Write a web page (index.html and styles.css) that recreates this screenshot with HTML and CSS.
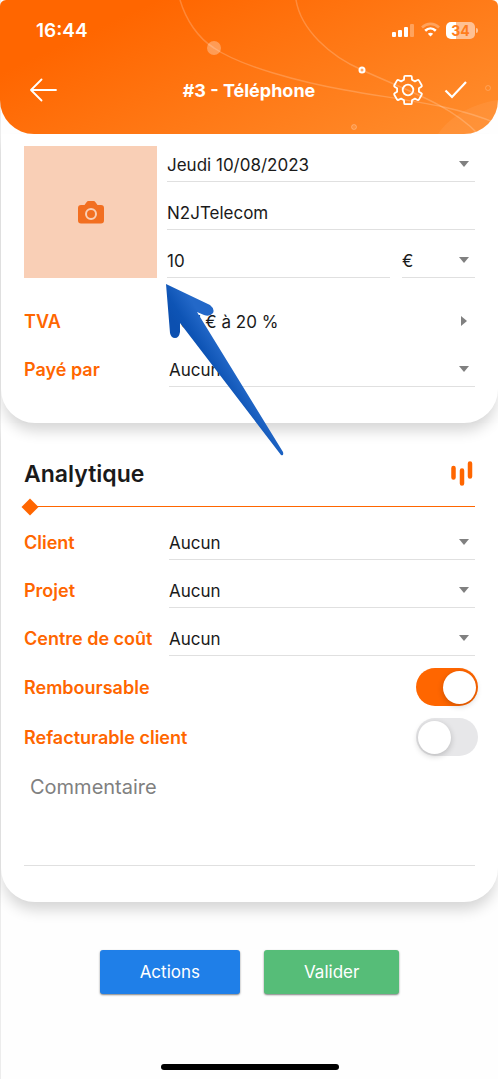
FILE: index.html
```html
<!DOCTYPE html>
<html lang="fr">
<head>
<meta charset="utf-8">
<meta name="viewport" content="width=device-width, initial-scale=1">
<title>#3 - Téléphone</title>
<link rel="stylesheet" href="styles.css">
</head>
<body>
<div class="screen">
  <header class="header">
    <svg class="header-art" viewBox="0 0 498 134" preserveAspectRatio="xMidYMid slice" aria-hidden="true">
      <g fill="none" stroke="#fff" stroke-opacity=".2" stroke-width="1.5">
        <path d="M180 0C186 20 198 38 214 48C240 66 300 82 345 90C400 100 452 104 498 124"/>
        <path d="M296 0C301 30 330 56 362 70C405 90 450 104 478 134"/>
      </g>
      <circle cx="214" cy="48" r="7" fill="#fff" fill-opacity=".3"/>
      <circle cx="362" cy="70" r="2.5" fill="#ffa868" stroke="#fff" stroke-width="2"/>
      <circle cx="354" cy="127" r="2.5" fill="#fff" fill-opacity=".12" stroke="#fff" stroke-opacity=".25"/>
      <circle cx="488" cy="88" r="2.5" fill="none" stroke="#fff" stroke-opacity=".2"/>
      <path d="M438 134C450 116 472 104 498 100V134Z" fill="#fff" fill-opacity=".06"/>
    </svg>
    <div class="status">
      <span class="time">16:44</span>
      <div class="status-icons">
        <svg width="23" height="16" viewBox="0 0 23 16" fill="#fff" aria-hidden="true">
          <rect y="10" width="4" height="5" rx="1"/><rect x="6" y="8" width="4" height="7" rx="1"/><rect x="12" y="5" width="4" height="10" rx="1"/><rect x="18" y="2" width="4" height="13" rx="1" opacity=".3"/>
        </svg>
        <svg width="19" height="16" viewBox="0 0 19 16" fill="none" stroke="#fff" stroke-width="2.6" aria-hidden="true">
          <path d="M1 5.5C6 .6 13 .6 18 5.500" opacity=".3"/>
          <path d="M4.200 8.700C7.300 5.800 11.700 5.800 14.800 8.700"/>
          <path d="M9.500 14.500L6.800 11.800C8.500 10.500 10.500 10.500 12.200 11.800Z" fill="#fff" stroke="none"/>
        </svg>
        <span class="battery">34</span>
      </div>
    </div>
    <div class="toolbar">
      <button class="icon-button" type="button" aria-label="Retour">
        <svg width="28" height="24" viewBox="0 0 28 24" fill="none" stroke="#fff" stroke-width="1.800" stroke-linecap="round" stroke-linejoin="round"><path d="M26 12H1M11.500 1.500L1 12L11.500 22.500"/></svg>
      </button>
      <h1 class="title">#3 - Téléphone</h1>
      <div class="tools">
        <button class="icon-button" type="button" aria-label="Paramètres">
          <svg width="32" height="32" viewBox="-16 -16 32 32" fill="none" stroke="#fff" stroke-width="1.800" stroke-linejoin="round"><path d="M-2.800 -14.200H2.800Q3.800 -14.200 3.800 -13.200L4 -10.300L6.900 -8.600L9.600 -10Q10.400 -10.400 10.900 -9.600L13.700 -4.700Q14.200 -3.800 13.400 -3.300L10.900 -1.700V1.700L13.400 3.300Q14.200 3.800 13.700 4.700L10.900 9.600Q10.400 10.400 9.600 10L6.900 8.600L4 10.300L3.800 13.200Q3.800 14.200 2.800 14.200H-2.800Q-3.800 14.200 -3.800 13.200L-4 10.300L-6.900 8.600L-9.600 10Q-10.400 10.400 -10.900 9.600L-13.700 4.700Q-14.200 3.800 -13.400 3.300L-10.900 1.700V-1.700L-13.400 -3.300Q-14.200 -3.800 -13.700 -4.700L-10.900 -9.600Q-10.400 -10.400 -9.600 -10L-6.900 -8.600L-4 -10.300L-3.800 -13.200Q-3.800 -14.200 -2.800 -14.200Z"/><circle r="5.300"/></svg>
        </button>
        <button class="icon-button" type="button" aria-label="Enregistrer">
          <svg width="24" height="20" viewBox="0 0 24 20" fill="none" stroke="#fff" stroke-width="2.200"><path d="M1.500 10.500L8 17L22 2"/></svg>
        </button>
      </div>
    </div>
  </header>

  <form class="form">
    <section class="card expense">
      <div class="receipt">
        <button class="photo" type="button" aria-label="Ajouter une photo">
          <svg width="26" height="23" viewBox="0 0 26 23"><path d="M3 4H6.500L8.500 1.200Q9.200 0 10.500 0H15.500Q16.800 0 17.500 1.200L19.500 4H23Q26 4 26 7V19.500Q26 22.500 23 22.500H3Q0 22.500 0 19.500V7Q0 4 3 4Z" fill="#f26f21"/><circle cx="13" cy="13" r="5" fill="none" stroke="#f9cfb6" stroke-width="2"/></svg>
        </button>
        <div class="receipt-fields">
          <div class="field down"><select aria-label="Date"><option>Jeudi 10/08/2023</option></select></div>
          <div class="field"><input type="text" aria-label="Fournisseur" value="N2JTelecom"></div>
          <div class="amount">
            <div class="field"><input type="text" inputmode="decimal" aria-label="Montant" value="10"></div>
            <div class="field down"><select aria-label="Devise"><option>€</option></select></div>
          </div>
        </div>
      </div>
      <div class="rows">
        <div class="row">
          <label class="label" for="tva">TVA</label>
          <div class="field next"><button id="tva" type="button">1,67 € à 20 %</button></div>
        </div>
        <div class="row">
          <label class="label" for="paye">Payé par</label>
          <div class="field down"><select id="paye"><option>Aucun</option></select></div>
        </div>
      </div>
      <svg class="pointer" width="120" height="172" viewBox="0 0 120 172" aria-hidden="true">
        <defs><linearGradient id="shaft" gradientUnits="userSpaceOnUse" x1="40" y1="88" x2="62" y2="74"><stop offset="0" stop-color="#0c50b0"/><stop offset=".35" stop-color="#0e54b5"/><stop offset="1" stop-color="#2368c8"/></linearGradient></defs>
        <path d="M0 0L44 21Q49 25 47 29Q44 33 38 31L31 28L117 168Q118 172 115 171L14 39V48Q13 54 9 54Q5 54 4 49Z" fill="url(#shaft)"/>
      </svg>
    </section>

    <section class="card analytics">
      <div class="section-head">
        <h2>Analytique</h2>
        <svg width="22" height="26" viewBox="0 0 22 26" fill="none" stroke="#ff6600" stroke-width="4.500" stroke-linecap="round" aria-hidden="true"><path d="M2.500 7V16.500M11 9.500V22.500M19 2.500V15.500"/></svg>
      </div>
      <div class="divider"></div>
      <div class="rows">
        <div class="row">
          <label class="label" for="client">Client</label>
          <div class="field down"><select id="client"><option>Aucun</option></select></div>
        </div>
        <div class="row">
          <label class="label" for="projet">Projet</label>
          <div class="field down"><select id="projet"><option>Aucun</option></select></div>
        </div>
        <div class="row">
          <label class="label" for="centre">Centre de coût</label>
          <div class="field down"><select id="centre"><option>Aucun</option></select></div>
        </div>
        <div class="switch-row">
          <label class="label" for="remb">Remboursable</label>
          <input class="switch" id="remb" type="checkbox" role="switch" checked>
        </div>
        <div class="switch-row">
          <label class="label" for="refac">Refacturable client</label>
          <input class="switch" id="refac" type="checkbox" role="switch">
        </div>
      </div>
      <textarea class="comment" aria-label="Commentaire" placeholder="Commentaire"></textarea>
    </section>

    <div class="actions">
      <button class="button blue" type="button">Actions</button>
      <button class="button green" type="submit">Valider</button>
    </div>
  </form>
  <div class="home-bar"></div>
</div>
</body>
</html>
```

FILE: styles.css
```css
* {
  box-sizing: border-box;
}

body {
  margin: 0;
  background: #fefefe;
  color: #1a1a1a;
  font-family: Inter, "Liberation Sans", sans-serif;
  font-size: 17px;
}

button,
input,
select,
textarea {
  margin: 0;
  padding: 0;
  border: 0;
  border-radius: 0;
  background: none;
  color: inherit;
  font: inherit;
  appearance: none;
  outline: none;
}

svg {
  display: block;
}

.screen {
  display: flex;
  flex-direction: column;
  min-height: 100vh;
  border-left: 1px solid #ececec;
}

.header {
  position: relative;
  z-index: 2;
  overflow: hidden;
  margin-left: -1px;
  padding-bottom: 24px;
  border-radius: 6px 6px 34px 34px;
  background: linear-gradient(155deg, #ff6600 20%, #ff8c2c 95%);
  color: #fff;
}

.header-art {
  position: absolute;
  inset: 0;
  width: 100%;
  height: 100%;
}

.status,
.toolbar {
  position: relative;
  display: flex;
  align-items: center;
  justify-content: space-between;
}

.status {
  height: 60px;
  padding: 0 20px 0 36px;
}

.time {
  font-size: 19px;
  font-weight: 600;
}

.status-icons {
  display: flex;
  align-items: center;
  gap: 6px;
}

.battery {
  position: relative;
  width: 29px;
  height: 17px;
  margin-right: 3px;
  border-radius: 5px;
  background: linear-gradient(90deg, #fff 34%, #ffc193 34%);
  color: #ff7d1c;
  font-size: 14px;
  font-weight: 700;
  line-height: 17px;
  text-align: center;
}

.battery::after {
  content: "";
  position: absolute;
  top: 6px;
  right: -3px;
  width: 2px;
  height: 5px;
  border-radius: 0 2px 2px 0;
  background: #ffc193;
}

.toolbar {
  display: grid;
  grid-template-columns: 1fr auto 1fr;
  height: 60px;
  margin-bottom: -10px;
  padding: 0 30px;
}

.icon-button {
  cursor: pointer;
}

.title {
  margin: 0;
  font-size: 18px;
  font-weight: 700;
}

.tools {
  display: flex;
  align-items: center;
  justify-content: flex-end;
  gap: 20px;
}

.card {
  position: relative;
  padding: 12px 23px 36px;
  border-radius: 0 0 34px 34px;
  background: #fff;
  box-shadow: 0 10px 14px -2px rgba(0, 0, 0, 0.16);
}

.expense {
  z-index: 1;
}

.receipt {
  display: grid;
  grid-template-columns: 133px 1fr;
  gap: 10px;
}

.photo {
  display: grid;
  place-items: center;
  background: #f9cfb6;
  cursor: pointer;
}

.receipt-fields,
.rows {
  display: grid;
  gap: 12px;
}

.rows {
  margin-top: 25px;
}

.amount {
  display: grid;
  grid-template-columns: 1fr 73px;
  gap: 12px;
}

.field {
  position: relative;
  height: 36px;
  border-bottom: 1px solid #e0e0e0;
}

.field > * {
  display: block;
  width: 100%;
  height: 100%;
  padding-top: 2px;
  text-align: left;
}

.down::after,
.next::after {
  content: "";
  position: absolute;
  pointer-events: none;
  background: #808080;
}

.down::after {
  top: 15px;
  right: 6px;
  width: 10px;
  height: 6px;
  clip-path: polygon(0 0, 100% 0, 50% 100%);
}

.next {
  border-color: transparent;
}

.next::after {
  top: 13px;
  right: 8px;
  width: 6px;
  height: 10px;
  clip-path: polygon(0 0, 100% 50%, 0 100%);
}

.row {
  display: grid;
  grid-template-columns: 145px 1fr;
  align-items: center;
}

.label {
  color: #ff6600;
  font-size: 18px;
  font-weight: 600;
  white-space: nowrap;
}

.pointer {
  position: absolute;
  top: 150px;
  left: 165px;
}

.analytics {
  padding-top: 34px;
}

.section-head {
  display: flex;
  align-items: center;
  justify-content: space-between;
  height: 34px;
  padding-right: 2px;
}

.section-head h2 {
  margin: 0;
  font-size: 23px;
  font-weight: 600;
}

.divider {
  display: flex;
  align-items: center;
  height: 1px;
  margin-top: 15px;
  background: #ff6600;
}

.divider::before {
  content: "";
  width: 12px;
  height: 12px;
  background: #ff6600;
  transform: rotate(45deg);
}

.analytics .rows {
  margin-top: 17px;
}

.switch-row {
  display: flex;
  align-items: center;
  justify-content: space-between;
  margin-right: -3px;
}

.switch {
  display: flex;
  align-items: center;
  width: 62px;
  height: 38px;
  padding: 2px;
  border-radius: 19px;
  background: #e7e7e9;
  cursor: pointer;
}

.switch::before {
  content: "";
  width: 33px;
  height: 33px;
  border-radius: 50%;
  background: #fff;
  box-shadow: 0 2px 6px rgba(0, 0, 0, 0.2);
}

.switch:checked {
  justify-content: flex-end;
  background: #ff6600;
}

.comment {
  display: block;
  width: 100%;
  height: 98px;
  margin-top: 12px;
  padding: 7px 6px;
  border-bottom: 1px solid #e0e0e0;
  font-size: 20px;
  line-height: 24px;
  resize: none;
}

.comment::placeholder {
  color: #808080;
}

.actions {
  display: flex;
  justify-content: center;
  gap: 24px;
  padding: 48px 0;
}

.button {
  height: 44px;
  padding: 0 40px;
  border-radius: 3px;
  box-shadow: 0 1px 2px rgba(0, 0, 0, 0.5);
  color: #fff;
  cursor: pointer;
}

.blue {
  background: #1f7fe8;
}

.green {
  background: #56bd78;
}

.home-bar {
  align-self: center;
  width: 178px;
  height: 6px;
  margin-top: auto;
  margin-bottom: 9px;
  border-radius: 3px;
  background: #000;
}
```
